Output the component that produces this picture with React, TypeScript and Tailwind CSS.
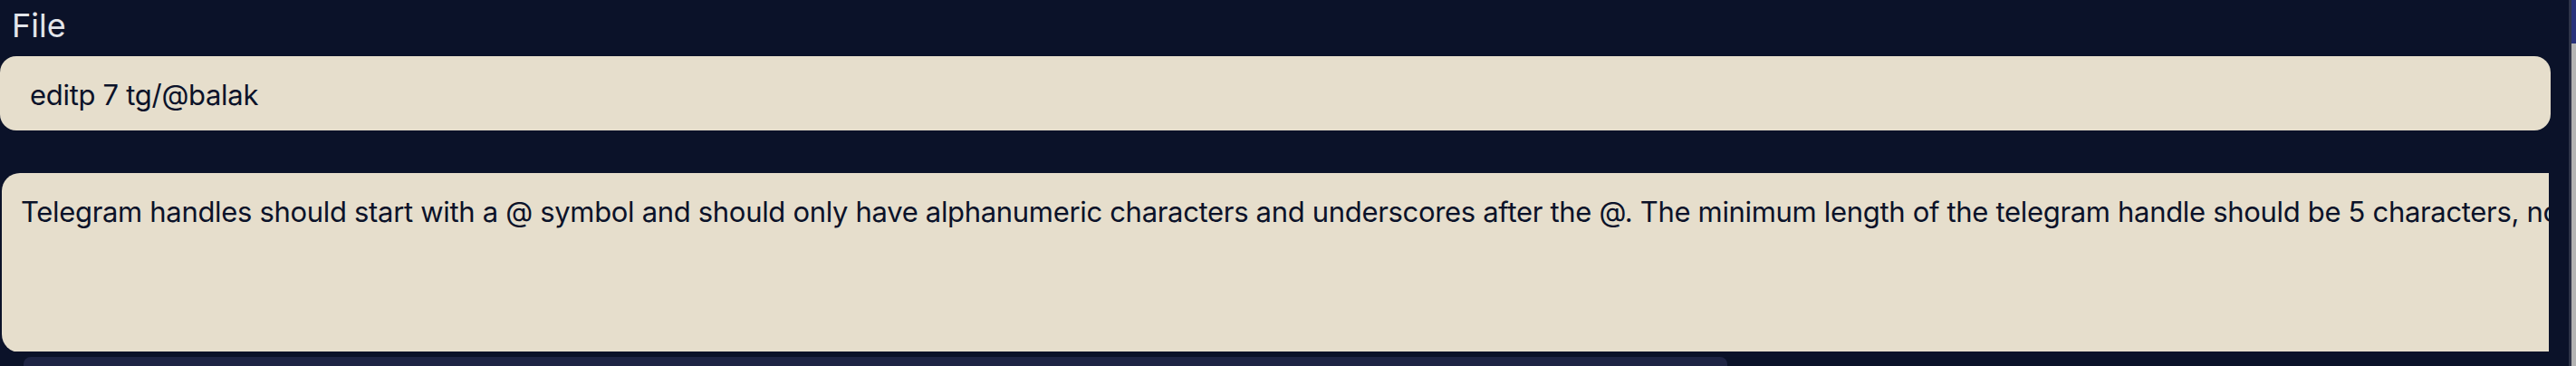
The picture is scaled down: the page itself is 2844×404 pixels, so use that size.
import React from "react";

const hint =
  "Telegram handles should start with a @ symbol and should only have alphanumeric characters and underscores after the @. The minimum length of the telegram handle should be 5 characters, not including the @ symbol.";

const App = () => {
  return (
    <div className="w-[2844px] h-[404px] bg-[#0b1229] overflow-hidden flex font-['Inter',sans-serif]">
      {/* form column */}
      <div className="flex-1 flex flex-col">
        <label className="pl-[13px] pt-[6px] text-[36px] leading-[44px] text-[#e3e5ea]">File</label>
        <div className="mt-[12px] w-[2816px] h-[83px] rounded-[18px] bg-[#e6decc] flex items-center pl-[33px] pt-[5px] text-[31px] tracking-[-0.3px] text-[#0b1229]">
          editp 7 tg/@balak
        </div>
        <div className="mt-[47px] ml-[2px] w-[2812px] overflow-hidden">
          <div className="w-[3600px] h-[198px] rounded-[20px] bg-[#e6decc] pl-[21px] pt-[21px] text-[31px] leading-[44px] tracking-[-0.32px] text-[#0b1229] whitespace-nowrap">
            {hint}
          </div>
        </div>
        <div className="mt-[6px] ml-[26px] w-[1881px] h-[10px] rounded-t-[8px] bg-[#1e2444]" />
      </div>
      {/* window scrollbar */}
      <div className="w-[8px] flex">
        <div className="w-[3px] bg-[#2e3347]" />
        <div className="flex-1 flex flex-col bg-[#b3b3b3]">
          <div className="h-[48px] bg-[#28317a]" />
        </div>
      </div>
    </div>
  );
};

export default App;
